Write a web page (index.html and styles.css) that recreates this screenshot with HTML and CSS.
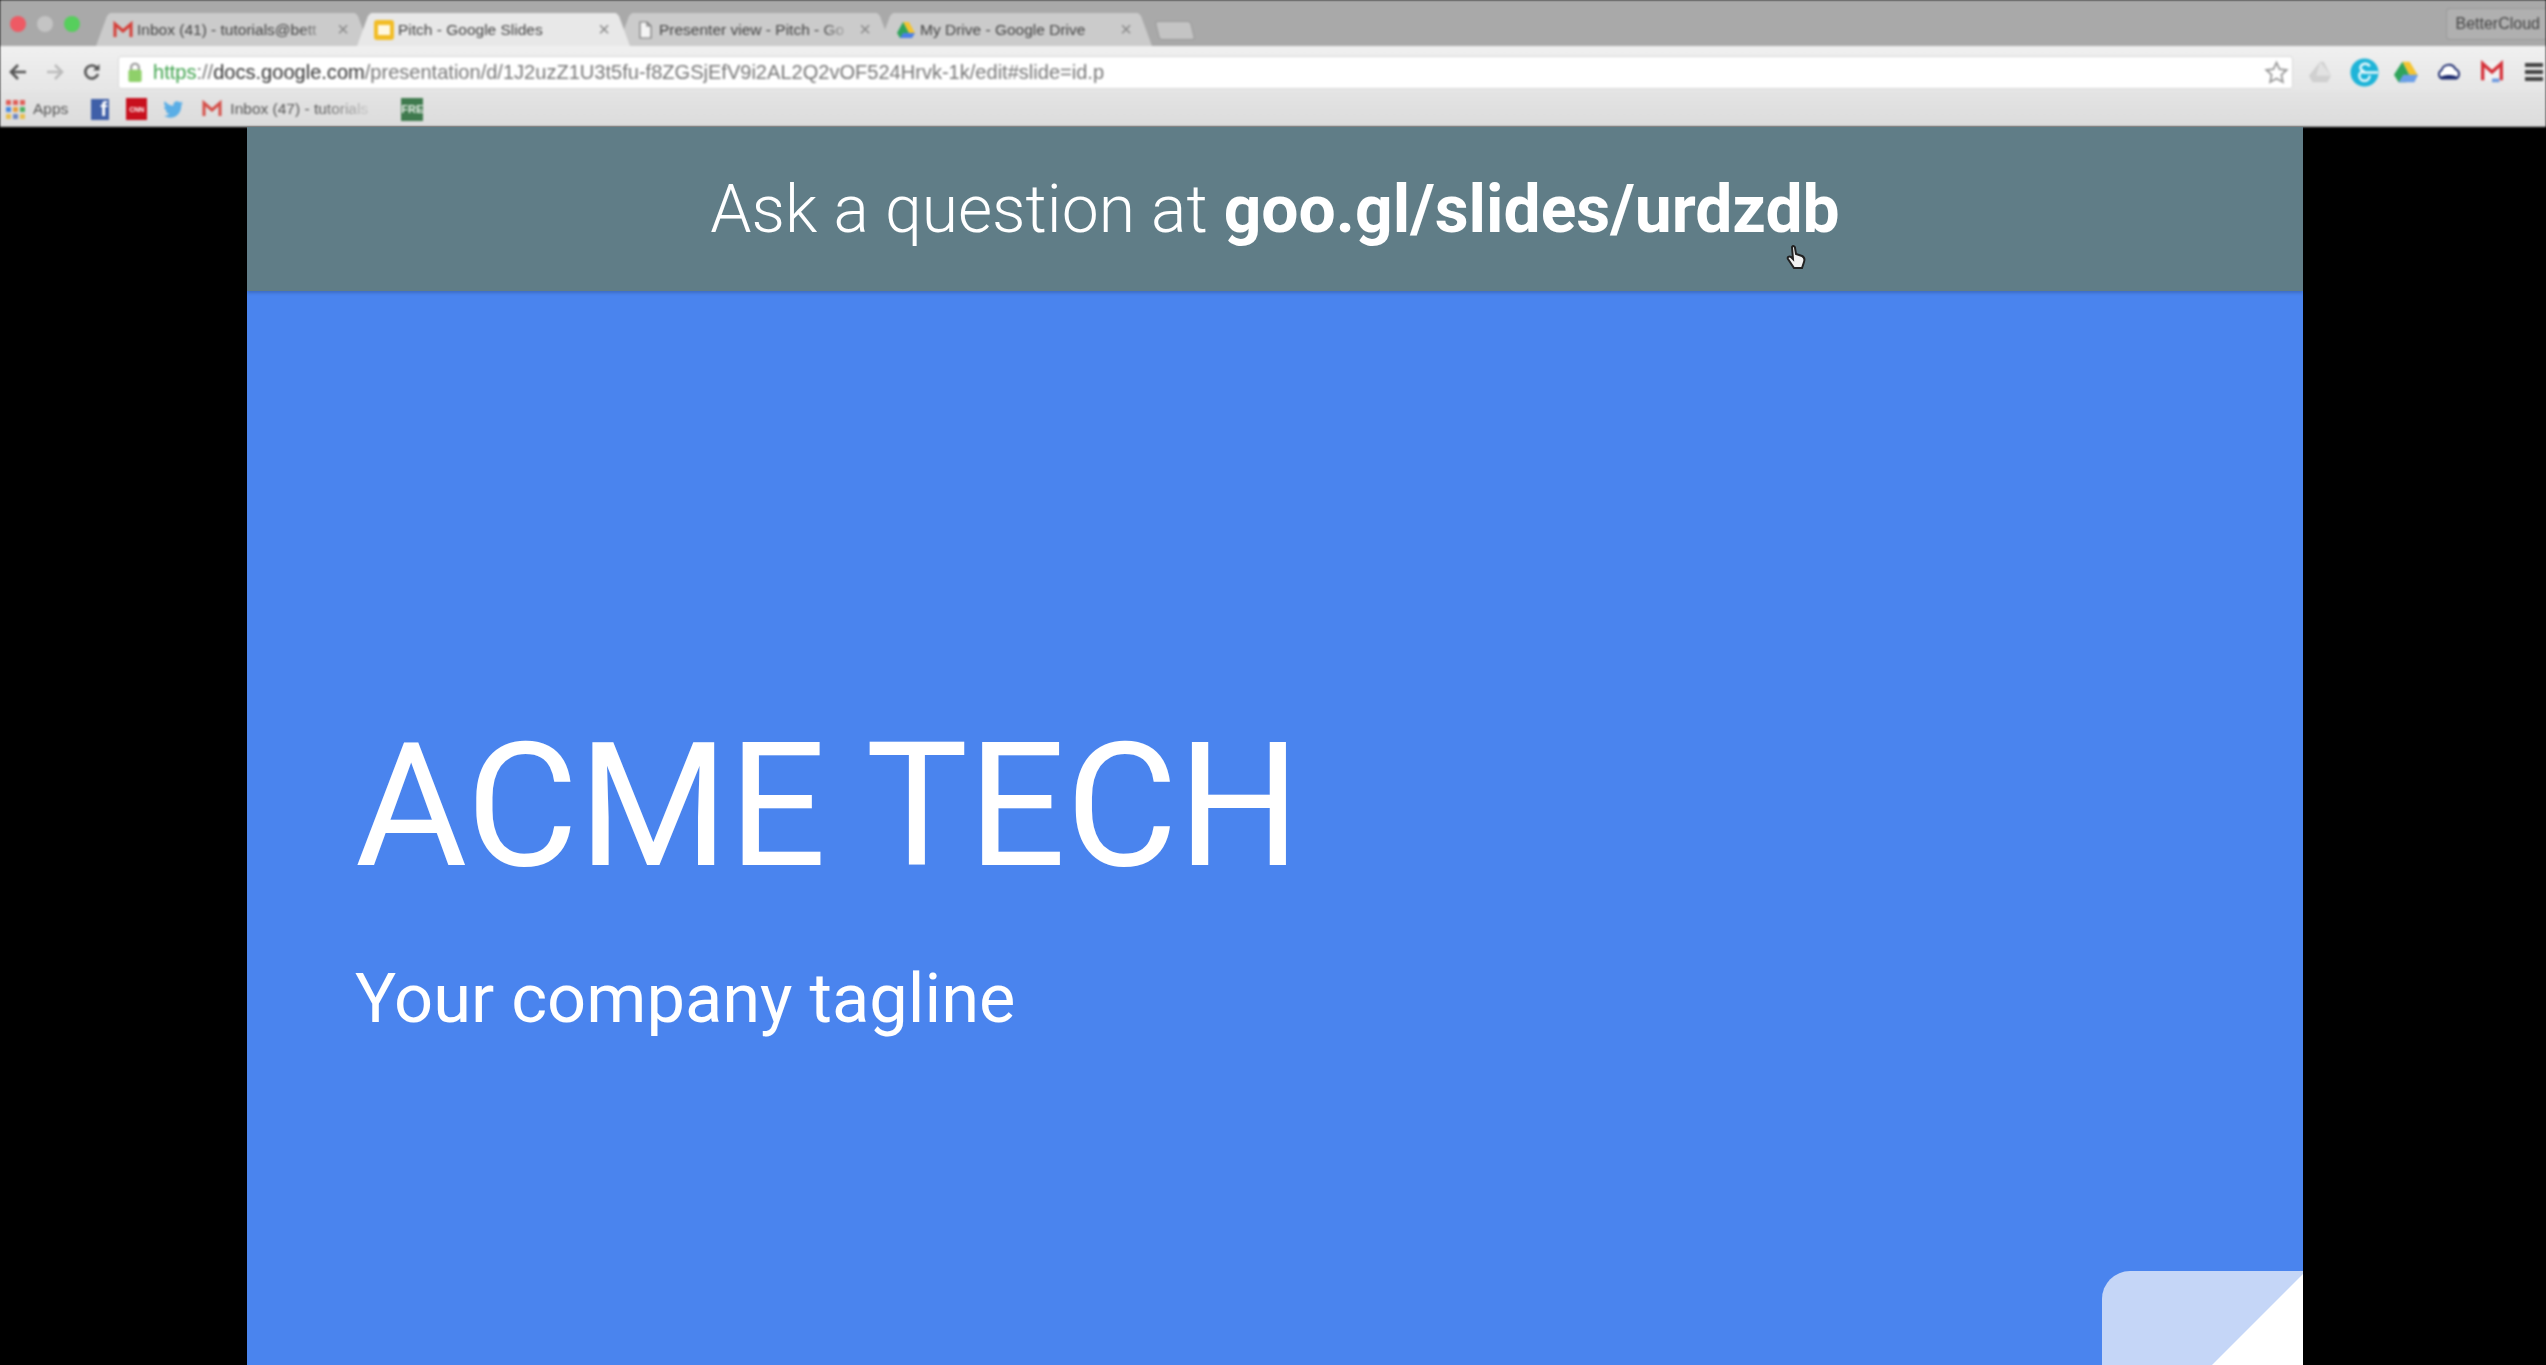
FILE: index.html
```html
<!DOCTYPE html>
<html lang="en">
<head>
  <meta charset="UTF-8" />
  <title>Pitch - Google Slides</title>
  <link rel="stylesheet" href="styles.css">
</head>
<body>
  <div class="browser">
    <div class="tabstrip">
      <div class="lights">
        <span class="light red"></span>
        <span class="light grey"></span>
        <span class="light green"></span>
      </div>
      <div class="tab">
        <svg class="fav" viewBox="0 0 20 16"><path d="M2 15V2l8 7 8-7v13" fill="none" stroke="#d5403a" stroke-width="3"/></svg>
        <span class="tab-title">Inbox (41) - tutorials@bett</span>
        <span class="tab-x">×</span>
      </div>
      <div class="tab active">
        <svg class="fav" viewBox="0 0 20 20"><rect width="20" height="20" rx="3" fill="#f2bd27"/><rect x="4" y="5" width="12" height="10" fill="#fff8e0"/></svg>
        <span class="tab-title">Pitch - Google Slides</span>
        <span class="tab-x">×</span>
      </div>
      <div class="tab">
        <svg class="fav" viewBox="0 0 20 20"><path d="M5 2h7l4 4v12H5zM12 2v4h4" fill="#f4f4f4" stroke="#777" stroke-width="1.2"/></svg>
        <span class="tab-title">Presenter view - Pitch - Go</span>
        <span class="tab-x">×</span>
      </div>
      <div class="tab">
        <svg class="fav" viewBox="0 0 20 20"><path d="M7 2h6l6 11h-6z" fill="#f4c430"/><path d="M7 2l6 11-3 5H4L1 13z" fill="#2fa45a"/><path d="M4 18l3-5h12l-3 5z" fill="#4a80e8"/></svg>
        <span class="tab-title">My Drive - Google Drive</span>
        <span class="tab-x">×</span>
      </div>
      <div class="new-tab"></div>
      <div class="profile">BetterCloud</div>
    </div>

    <div class="toolbar">
      <svg class="nav-icon" viewBox="0 0 20 20"><path d="M18 10H4M10 3l-7 7 7 7" fill="none" stroke="#555" stroke-width="2.6"/></svg>
      <svg class="nav-icon" viewBox="0 0 20 20"><path d="M2 10h14M10 3l7 7-7 7" fill="none" stroke="#bbb" stroke-width="2.6"/></svg>
      <svg class="nav-icon" viewBox="0 0 20 20"><path d="M16 12a6.5 6.5 0 1 1-1-6" fill="none" stroke="#555" stroke-width="2.6"/><path d="M17.5 2v6.5H11z" fill="#555"/></svg>
      <div class="omnibox">
        <svg class="lock" viewBox="0 0 14 20"><path d="M3.5 9V6a3.5 3.5 0 0 1 7 0v3" fill="none" stroke="#9a9a9a" stroke-width="2"/><rect x="1" y="8" width="12" height="11" rx="1.5" fill="#8fd06a"/></svg>
        <span class="url"><span class="scheme">https</span>://<span class="host">docs.google.com</span>/presentation/d/1J2uzZ1U3t5fu-f8ZGSjEfV9i2AL2Q2vOF524Hrvk-1k/edit#slide=id.p</span>
        <svg class="star" viewBox="0 0 24 24"><path d="M12 2.500l2.900 6.300 6.900.8-5.100 4.700 1.400 6.800-6.100-3.400-6.100 3.400 1.400-6.800-5.100-4.700 6.900-.8z" fill="#fff" stroke="#999" stroke-width="1.700"/></svg>
      </div>
      <div class="extensions">
        <svg class="ext" viewBox="0 0 28 28"><path d="M14 3h4l8 15-4 7H6l-4-7z" fill="#d0d0d0"/><path d="M14 3l-4 15h16z" fill="#e2e2e2"/></svg>
        <svg class="ext ext-big" viewBox="0 0 28 28"><circle cx="14" cy="14" r="13.500" fill="#1eb4d8"/><path d="M19 8a5 5 0 0 0-9 1c0 2 2 3.500 4 4-3 0-5 1.500-5 4a5 5 0 0 0 10 0M12 14h15" fill="none" stroke="#e8f8fc" stroke-width="2.400"/></svg>
        <svg class="ext" viewBox="0 0 28 28"><path d="M10 3h8l9 15h-9z" fill="#f4c430"/><path d="M10 3l8 15-4 7H6L1 17z" fill="#2fa45a"/><path d="M6 25l5-8h16l-4 8z" fill="#6a9ee8"/></svg>
        <svg class="ext" viewBox="0 0 28 20"><path d="M6 17a5 5 0 0 1 0-9 8 8 0 0 1 15-1 5.500 5.500 0 0 1 1 10z" fill="#fff" stroke="#1c2a6e" stroke-width="2"/><path d="M4 17c2-5 18-5 20 0z" fill="#1c2a6e"/></svg>
        <svg class="ext" viewBox="0 0 28 28"><rect x="2" y="3" width="24" height="20" fill="#f2f2f2"/><path d="M4 23V5l10 9 10-9v18" fill="none" stroke="#d5323a" stroke-width="3.600"/><path d="M14 21h8v4h-8z" fill="#6f9be0"/></svg>
        <div class="menu"><span></span><span></span><span></span></div>
      </div>
    </div>

    <div class="bookmarks">
      <div class="bm">
        <div class="apps">
          <i class="c1"></i><i class="c1"></i><i class="c1"></i>
          <i class="c2"></i><i class="c3"></i><i class="c4"></i>
          <i class="c5"></i><i class="c6"></i><i class="c5"></i>
        </div>
        <span class="bm-label">Apps</span>
      </div>
      <div class="bm bm-fb">f</div>
      <div class="bm bm-cnn">CNN</div>
      <svg class="bm" width="21" height="18" viewBox="0 0 24 20"><path d="M23 3c-1 .5-2 .7-3 .8 1-.7 1.800-1.600 2.200-2.800-1 .6-2 1-3.200 1.300C16 -.5 11 1.500 12 6.200 8 6 4.500 4 2 1c-1.400 2.300-.7 5.200 1.500 6.700-.8 0-1.600-.2-2.300-.6 0 2.400 1.700 4.400 4 4.900-.7.200-1.500.2-2.200.1.600 2 2.500 3.400 4.600 3.400C5.500 17 3 18 1 17.800c8 5 20 1 20-12.500 .8-.6 1.500-1.400 2-2.300z" fill="#5aaee6"/></svg>
      <div class="bm bm-mail">
        <svg class="fav" viewBox="0 0 20 16"><path d="M2 15V2l8 7 8-7v13" fill="none" stroke="#d5504a" stroke-width="3"/></svg>
        <span class="bm-label fade">Inbox (47) - tutorials</span>
      </div>
      <div class="bm bm-fre">FRE</div>
    </div>
  </div>

  <div class="stage">
    <div class="slide">
      <div class="question-bar">
        <span class="ask">Ask a question at</span> <strong>goo.gl/slides/urdzdb</strong>
      </div>
      <div class="slide-body">
        <h1>ACME TECH</h1>
        <p>Your company tagline</p>
      </div>
      <div class="corner"></div>
      <svg class="cursor" viewBox="0 0 20 26"><path d="M6 2c1-1.500 3-1 3 1l1 6 6 2c2 1 3 3 2 6l-2 6H8l-6-9c-1-2 1-3 3-2l2 2z" fill="#f2f2f2" stroke="#222" stroke-width="2"/></svg>
    </div>
  </div>
</body>
</html>
```

FILE: styles.css
```css
* {
  box-sizing: border-box;
}
html, body {
  height: 100%;
}
body {
  margin: 0;
  display: flex;
  flex-direction: column;
  overflow: hidden;
  background: #000;
  font-family: 'Liberation Sans', Arial, sans-serif;
}

/* browser chrome */
.browser {
  flex: none;
  filter: blur(0.9px);
}
.tabstrip {
  height: 46px;
  display: flex;
  align-items: flex-end;
  padding-left: 10px;
  background: #a9a9a9;
}
.lights {
  display: flex;
  gap: 11px;
  width: 86px;
  align-self: flex-start;
  margin-top: 16px;
}
.light {
  width: 16px;
  height: 16px;
  border-radius: 50%;
}
.red { background: #ee5a64; }
.grey { background: #c4c4c4; }
.green { background: #56cf5c; }

.tab {
  position: relative;
  width: 273px;
  height: 33px;
  margin-right: -12px;
  padding: 0 20px 0 17px;
  display: flex;
  align-items: center;
  gap: 4px;
  font-size: 15.500px;
  color: #444;
}
.tab::before {
  content: "";
  position: absolute;
  inset: 0;
  background: #cbcbcb;
  clip-path: polygon(0 100%, 11px 3px, 14px 0, calc(100% - 14px) 0, calc(100% - 11px) 3px, 100% 100%);
  filter: drop-shadow(0 0 1px #777);
}
.tab.active {
  z-index: 1;
}
.tab.active::before {
  background: #e8e8e8;
}
.tab > * {
  position: relative;
}
.fav {
  flex: none;
  width: 20px;
  height: 20px;
}
.tab-title {
  flex: 1;
  white-space: nowrap;
  overflow: hidden;
  -webkit-mask-image: linear-gradient(to right, #000 85%, transparent);
  mask-image: linear-gradient(to right, #000 85%, transparent);
}
.active .tab-title {
  -webkit-mask-image: none;
  mask-image: none;
}
.tab-x {
  font-size: 20px;
  color: #888;
  margin-left: 4px;
}
.new-tab {
  width: 36px;
  height: 19px;
  margin: 0 0 6px 17px;
  background: #c4c4c4;
  border: 1px solid #999;
  border-radius: 3px;
  transform: skewX(14deg);
}
.profile {
  margin-left: auto;
  align-self: flex-start;
  margin-top: 8px;
  height: 32px;
  padding: 0 6px 0 9px;
  display: flex;
  align-items: center;
  font-size: 16px;
  color: #444;
  background: #b0b0b0;
  border: 1px solid #999;
  border-right: 0;
  border-radius: 4px 0 0 4px;
}

.toolbar {
  height: 45px;
  display: flex;
  align-items: center;
  padding: 7px 0 0 8px;
  gap: 17px;
  background: linear-gradient(#f0f0f0, #e6e6e6);
}
.nav-icon {
  flex: none;
  width: 20px;
  height: 20px;
}
.omnibox {
  flex: none;
  width: 2175px;
  margin-left: -1px;
  height: 33px;
  padding: 0 3px 0 8px;
  display: flex;
  align-items: center;
  gap: 10px;
  background: #fff;
  border: 1px solid #d8d8d8;
  border-radius: 3px;
  font-size: 20.060px;
  color: #777;
}
.lock {
  flex: none;
  width: 16px;
  height: 22px;
}
.url {
  flex: 1;
  white-space: nowrap;
}
.scheme { color: #3fa34d; }
.host { color: #333; }
.star {
  flex: none;
  width: 25px;
  height: 25px;
}
.extensions {
  flex: 1;
  display: flex;
  align-items: center;
  gap: 17px;
  margin-left: -3px;
}
.ext {
  flex: none;
  width: 26px;
  height: 26px;
}
.ext-big {
  width: 29px;
  height: 29px;
  margin: 0 -3px 0 0;
}
.menu {
  display: flex;
  flex-direction: column;
  gap: 3px;
  margin-left: 3px;
}
.menu span {
  display: block;
  width: 18px;
  height: 4px;
  background: #444;
}

.bookmarks {
  height: 36px;
  display: flex;
  align-items: center;
  padding: 1px 0 0 6px;
  gap: 16px;
  background: linear-gradient(#e4e4e4, #dcdcdc);
  border-bottom: 1px solid #b4b4b4;
  font-size: 15.500px;
  color: #555;
}
.bm {
  flex: none;
  display: flex;
  align-items: center;
  gap: 8px;
}
.apps {
  display: grid;
  grid-template-columns: repeat(3, 5px);
  gap: 2px;
}
.apps i {
  width: 5px;
  height: 5px;
}
.c1 { background: #e0605a; }
.c2 { background: #4a8ae0; }
.c3 { background: #e8a040; }
.c4 { background: #50b060; }
.c5 { background: #e8c050; }
.c6 { background: #7088c0; }
.bm-label {
  white-space: nowrap;
}
.fade {
  width: 148px;
  overflow: hidden;
  -webkit-mask-image: linear-gradient(to right, #000 60%, transparent);
  mask-image: linear-gradient(to right, #000 60%, transparent);
}
.bm-fb {
  width: 18px;
  height: 21px;
  margin-left: 7px;
  justify-content: flex-end;
  padding-right: 2px;
  background: #3f5fa8;
  color: #fff;
  font-weight: bold;
  font-size: 21px;
}
.bm-cnn {
  width: 21px;
  height: 22px;
  margin-left: 1px;
  justify-content: center;
  background: #c8101e;
  color: #fff;
  font-size: 7px;
  font-weight: bold;
}
.bm-mail {
  margin-left: 2px;
}
.bm-fre {
  width: 22px;
  height: 23px;
  margin-left: 7px;
  justify-content: center;
  background: #3f7a4e;
  color: #e8f0e8;
  font-size: 11px;
  font-weight: bold;
}

/* presentation */
.stage {
  flex: 1;
  min-height: 0;
  background: #000;
  display: flex;
  justify-content: center;
  padding-left: 4px;
}
.slide {
  position: relative;
  width: 2056px;
  height: 100%;
  overflow: hidden;
  background: #4a84ee;
  font-family: Roboto, sans-serif;
  color: #fff;
  filter: blur(0.6px);
}
.question-bar {
  height: 164px;
  display: flex;
  align-items: center;
  justify-content: center;
  gap: 16px;
  background: #607d87;
  box-shadow: 0 2px 3px rgba(0, 0, 0, 0.18);
  font-size: 66px;
}
.ask {
  font-weight: 300;
}
.question-bar strong {
  font-weight: 700;
}
.slide-body {
  padding: 412px 0 0 108px;
}
.slide-body h1 {
  margin: 0;
  font-size: 172px;
  font-weight: 400;
  line-height: 1.2;
}
.slide-body p {
  margin: 49px 0 0;
  font-size: 68.600px;
  font-weight: 400;
  line-height: 1.2;
}
.corner {
  position: absolute;
  right: 0;
  bottom: -60px;
  width: 201px;
  height: 154px;
  border-top-left-radius: 28px;
  background: #c5d6f7;
}
.corner::after {
  content: "";
  position: absolute;
  right: 0;
  top: 3px;
  width: 151px;
  height: 151px;
  background: #fff;
  clip-path: polygon(100% 0, 100% 100%, 0 100%);
}
.cursor {
  position: absolute;
  left: 1539px;
  top: 118px;
  width: 20px;
  height: 26px;
}
```
